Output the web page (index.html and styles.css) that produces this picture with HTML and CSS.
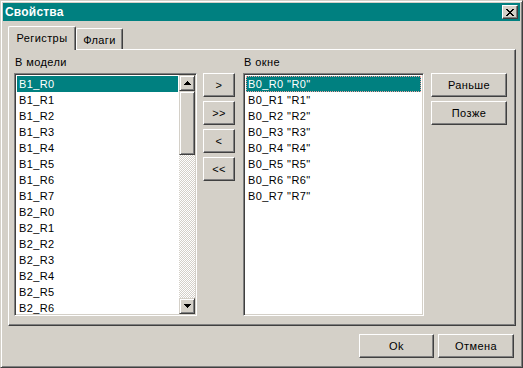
FILE: index.html
```html
<!DOCTYPE html>
<html>
<head>
<meta charset="utf-8">
<link rel="stylesheet" href="styles.css">
</head>
<body>
<div class="window">
  <div class="titlebar">
    <span class="title">Свойства</span>
    <div class="close"><svg width="8" height="7" viewBox="0 0 8 7" shape-rendering="crispEdges"><path d="M0 0h2v1h-2zM6 0h2v1h-2zM1 1h2v1h-2zM5 1h2v1h-2zM2 2h4v1h-4zM3 3h2v1h-2zM2 4h4v1h-4zM1 5h2v1h-2zM5 5h2v1h-2zM0 6h2v1h-2zM6 6h2v1h-2z" fill="#000"/></svg></div>
  </div>
  <div class="body">
    <div class="tabs">
      <div class="tab active tab-regs">Регистры</div>
      <div class="tab tab-flags">Флаги</div>
    </div>
    <div class="panel">
      <div class="grid">
        <div class="label label-model">В модели</div>
        <div class="listbox list-model">
          <div class="items">
            <div class="item selected">B1_R0</div>
            <div class="item">B1_R1</div>
            <div class="item">B1_R2</div>
            <div class="item">B1_R3</div>
            <div class="item">B1_R4</div>
            <div class="item">B1_R5</div>
            <div class="item">B1_R6</div>
            <div class="item">B1_R7</div>
            <div class="item">B2_R0</div>
            <div class="item">B2_R1</div>
            <div class="item">B2_R2</div>
            <div class="item">B2_R3</div>
            <div class="item">B2_R4</div>
            <div class="item">B2_R5</div>
            <div class="item">B2_R6</div>
          </div>
          <div class="scrollbar">
            <div class="sb-btn"><svg width="7" height="4" viewBox="0 0 7 4" shape-rendering="crispEdges"><path d="M3 0h1v1h1v1h1v1h1v1H0V3h1V2h1V1h1z" fill="#000"/></svg></div>
            <div class="sb-thumb"></div>
            <div class="sb-track"></div>
            <div class="sb-btn"><svg width="7" height="4" viewBox="0 0 7 4" shape-rendering="crispEdges"><path d="M0 0h7v1H6v1H5v1H4v1H3V3H2V2H1V1H0z" fill="#000"/></svg></div>
          </div>
        </div>
        <div class="move-buttons">
          <div class="btn btn-move">&gt;</div>
          <div class="btn btn-move">&gt;&gt;</div>
          <div class="btn btn-move">&lt;</div>
          <div class="btn btn-move">&lt;&lt;</div>
        </div>
        <div class="label label-window">В окне</div>
        <div class="listbox list-window">
          <div class="items">
            <div class="item selected focused">B0_R0 "R0"</div>
            <div class="item">B0_R1 "R1"</div>
            <div class="item">B0_R2 "R2"</div>
            <div class="item">B0_R3 "R3"</div>
            <div class="item">B0_R4 "R4"</div>
            <div class="item">B0_R5 "R5"</div>
            <div class="item">B0_R6 "R6"</div>
            <div class="item">B0_R7 "R7"</div>
          </div>
        </div>
        <div class="order-buttons">
          <div class="btn btn-order">Раньше</div>
          <div class="btn btn-order">Позже</div>
        </div>
      </div>
    </div>
    <div class="footer">
      <div class="btn btn-footer btn-ok">Ok</div>
      <div class="btn btn-footer btn-cancel">Отмена</div>
    </div>
  </div>
</div>
</body>
</html>
```

FILE: styles.css
```css
* { box-sizing: border-box; }
html, body { margin: 0; padding: 0; }
body {
  background: #d4d0c8;
  font-family: "Liberation Sans", Arial, sans-serif;
  font-size: 11px;
  letter-spacing: 0.4px;
  color: #000;
}
.window {
  width: 523px;
  height: 368px;
  background: #d4d0c8;
  border: 1px solid;
  border-color: #d4d0c8 #404040 #404040 #d4d0c8;
  box-shadow: inset 1px 1px #fff, inset -1px -1px #808080;
  padding: 2px;
  display: flex;
  flex-direction: column;
}
.titlebar {
  height: 18px;
  background: #008080;
  display: flex;
  align-items: center;
  justify-content: space-between;
  padding: 0 2px 0 2px;
}
.title {
  color: #fff;
  font-weight: bold;
  font-size: 12px;
  letter-spacing: 0.2px;
  line-height: 18px;
}
.close {
  width: 16px;
  height: 14px;
  background: #d4d0c8;
  border: 1px solid;
  border-color: #fff #404040 #404040 #fff;
  box-shadow: inset -1px -1px #808080;
  display: flex;
  align-items: center;
  justify-content: center;
  padding-right: 1px;
}
.close svg { display: block; }
.body {
  flex: 1;
  padding: 5px 4px 7px 5px;
  display: flex;
  flex-direction: column;
}
.tabs {
  display: flex;
  align-items: flex-end;
  height: 23px;
}
.tab {
  background: #d4d0c8;
  border-top: 1px solid #fff;
  border-left: 1px solid #fff;
  border-right: 1px solid #404040;
  box-shadow: inset -1px 0 #808080;
  border-radius: 2px 2px 0 0;
  line-height: 14px;
  text-align: center;
  padding-top: 4px;
}
.tab.active {
  height: 24px;
  margin-bottom: -1px;
  position: relative;
  z-index: 1;
}
.tab-regs { width: 68px; }
.tab-flags { width: 47px; height: 21px; }
.panel {
  height: 277px;
  border: 1px solid;
  border-color: #fff #404040 #404040 #fff;
  box-shadow: inset -1px -1px #808080;
  padding: 5px 8px 9px 5px;
}
.grid {
  display: grid;
  grid-template-columns: 183px 6px 32px 8px 181px 7px 76px;
  grid-template-rows: 18px 243px;
}
.label {
  line-height: 14px;
  padding-left: 1px;
}
.label-model { grid-column: 1; grid-row: 1; }
.list-model { grid-column: 1; grid-row: 2; }
.move-buttons { grid-column: 3; grid-row: 2; }
.label-window { grid-column: 5; grid-row: 1; }
.list-window { grid-column: 5; grid-row: 2; }
.order-buttons { grid-column: 7; grid-row: 2; }
.listbox {
  background: #fff;
  border: 1px solid;
  border-color: #808080 #fff #fff #808080;
  box-shadow: inset 1px 1px #404040, inset -1px -1px #d4d0c8;
  padding: 1px;
  display: flex;
  overflow: hidden;
}
.items {
  flex: 1;
  padding: 1px;
  overflow: hidden;
}
.item {
  height: 16px;
  line-height: 16px;
  padding-left: 2px;
  white-space: nowrap;
}
.item.selected {
  background: #008080;
  color: #fff;
}
.item.focused {
  outline: 1px dotted #f0a0a0;
  outline-offset: -1px;
}
.scrollbar {
  width: 16px;
  display: flex;
  flex-direction: column;
}
.sb-btn, .sb-thumb {
  background: #d4d0c8;
  border: 1px solid;
  border-color: #d4d0c8 #404040 #404040 #d4d0c8;
  box-shadow: inset 1px 1px #fff, inset -1px -1px #808080;
}
.sb-btn {
  height: 16px;
  flex: none;
  display: flex;
  align-items: center;
  justify-content: center;
}
.sb-btn svg { display: block; }
.sb-thumb { height: 64px; flex: none; }
.sb-track {
  flex: 1;
  background-color: #fff;
  background-image: conic-gradient(#d4d0c8 25%, #fff 0 50%, #d4d0c8 0 75%, #fff 0);
  background-size: 2px 2px;
}
.move-buttons, .order-buttons {
  display: flex;
  flex-direction: column;
  gap: 4px;
}
.btn {
  height: 24px;
  background: #d4d0c8;
  border: 1px solid;
  border-color: #fff #404040 #404040 #fff;
  box-shadow: inset -1px -1px #808080;
  display: flex;
  align-items: center;
  justify-content: center;
  line-height: 14px;
}
.footer {
  margin-top: 8px;
  display: flex;
  justify-content: flex-end;
  gap: 4px;
  padding-right: 2px;
}
.btn-ok { width: 75px; }
.btn-cancel { width: 76px; }
```
